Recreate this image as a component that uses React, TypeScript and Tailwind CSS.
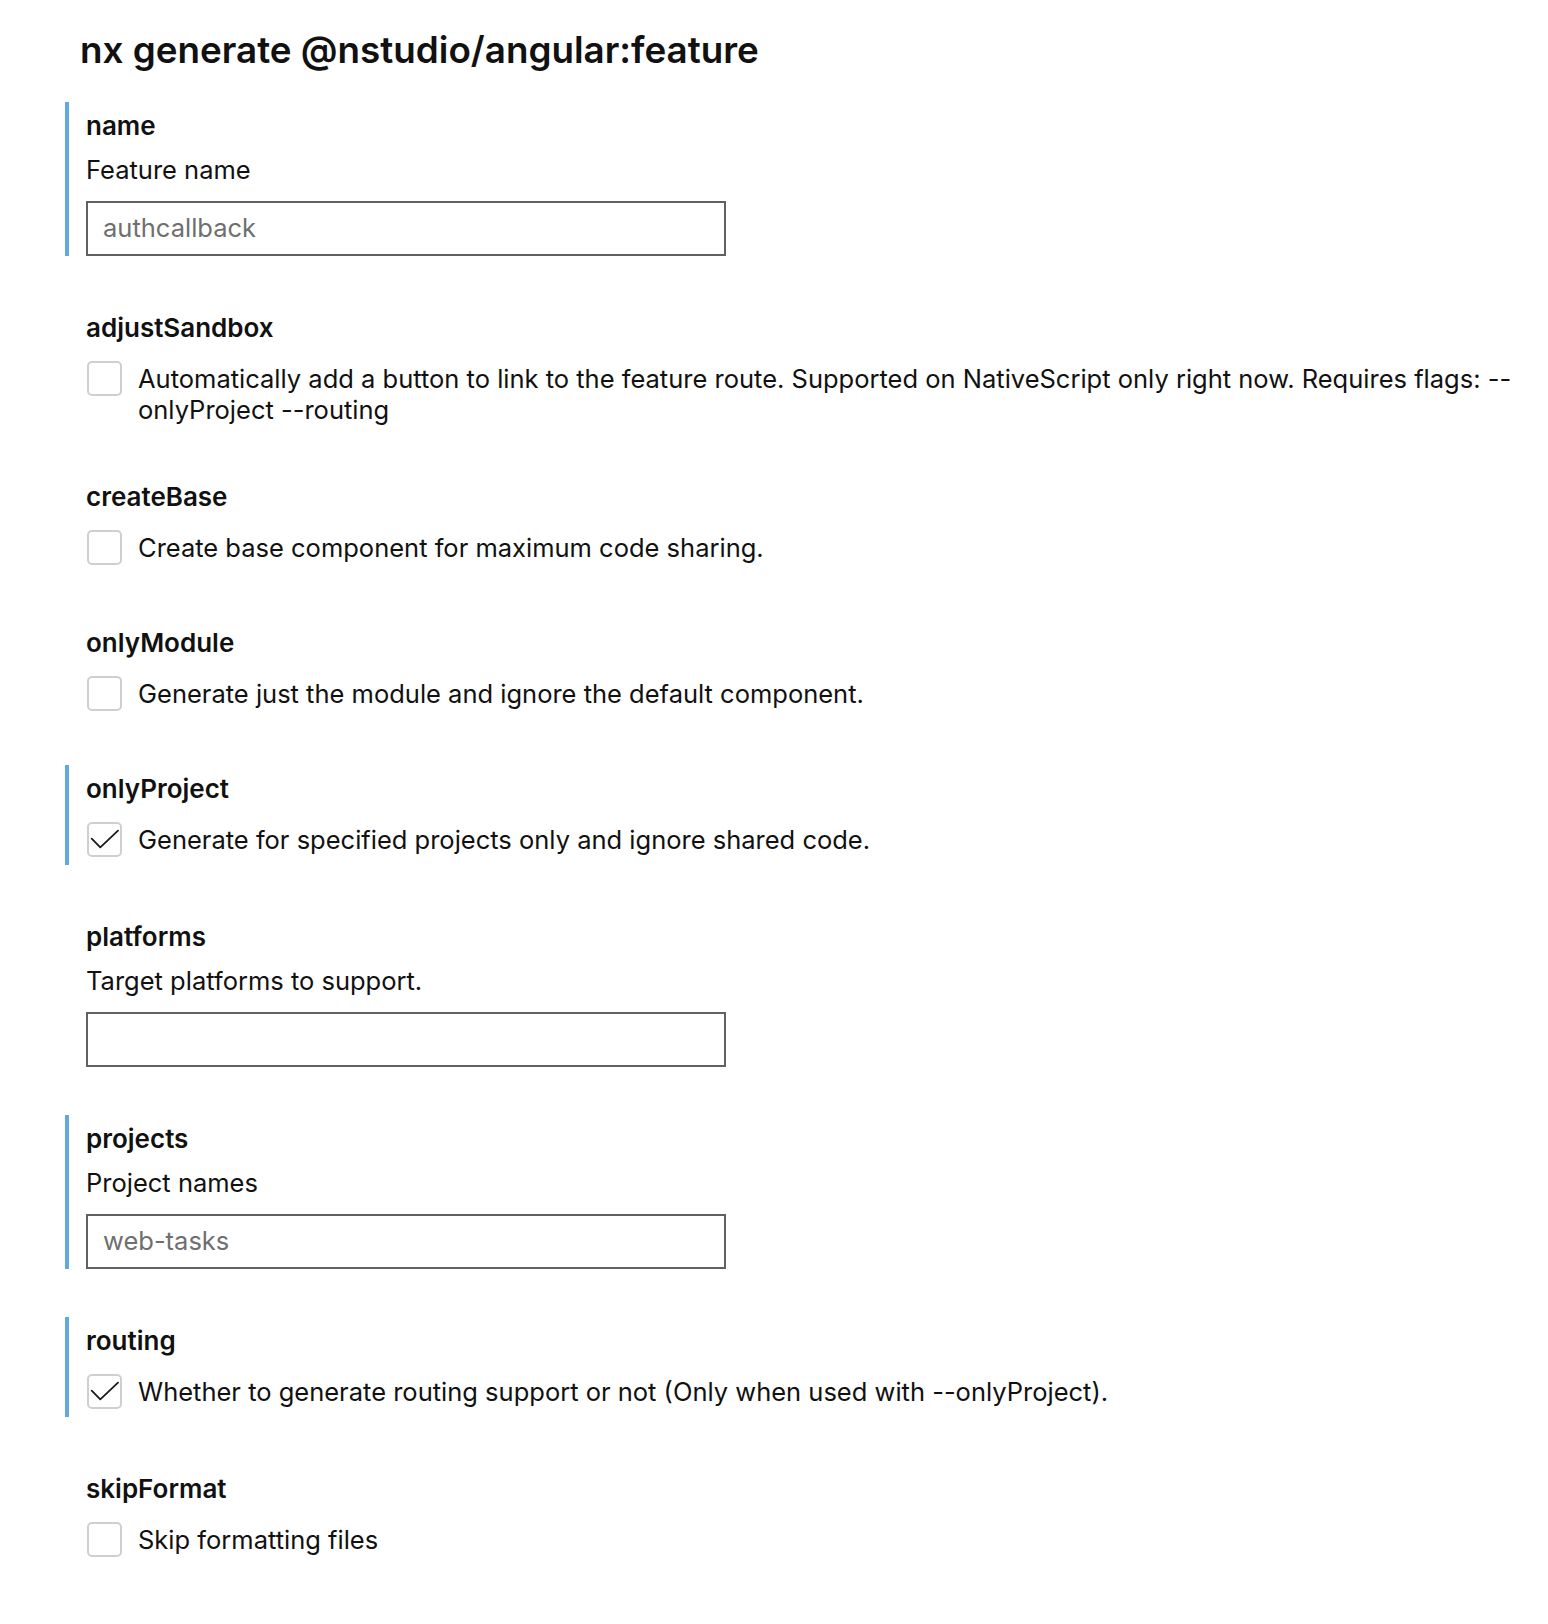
import React from "react";

type Field =
  | { kind: "input"; name: string; desc: string; value: string; active: boolean }
  | { kind: "check"; name: string; desc: string; checked: boolean; active: boolean };

const fields: Field[] = [
  { kind: "input", name: "name", desc: "Feature name", value: "authcallback", active: true },
  {
    kind: "check",
    name: "adjustSandbox",
    desc: "Automatically add a button to link to the feature route. Supported on NativeScript only right now. Requires flags: --onlyProject --routing",
    checked: false,
    active: false,
  },
  { kind: "check", name: "createBase", desc: "Create base component for maximum code sharing.", checked: false, active: false },
  { kind: "check", name: "onlyModule", desc: "Generate just the module and ignore the default component.", checked: false, active: false },
  { kind: "check", name: "onlyProject", desc: "Generate for specified projects only and ignore shared code.", checked: true, active: true },
  { kind: "input", name: "platforms", desc: "Target platforms to support.", value: "", active: false },
  { kind: "input", name: "projects", desc: "Project names", value: "web-tasks", active: true },
  { kind: "check", name: "routing", desc: "Whether to generate routing support or not (Only when used with --onlyProject).", checked: true, active: true },
  { kind: "check", name: "skipFormat", desc: "Skip formatting files", checked: false, active: false },
];

function Checkbox({ checked }: { checked: boolean }) {
  return (
    <div className="shrink-0 w-[35px] h-[35px] ml-px mt-[-2px] mb-[6px] rounded-[5px] border-2 border-[#cfcfcf] bg-white relative">
      {checked && (
        <svg className="absolute left-[-2px] top-[-2px]" width="35" height="35" viewBox="0 0 35 35" fill="none">
          <path d="M4.7 16.7 L13.3 25.3 L31 8.7" stroke="#1a1a1a" strokeWidth="1.8" strokeLinecap="round" strokeLinejoin="round" />
        </svg>
      )}
    </div>
  );
}

function Section({ f }: { f: Field }) {
  return (
    <div
      className={`mb-12 pt-2 pl-[17px] border-l-4 ${f.active ? "border-[#62a9de]" : "border-transparent"} ${f.kind === "check" && f.active ? "pb-[2px]" : ""}`}
    >
      <div className="text-[26px] leading-[32px] font-semibold text-[#111]">{f.name}</div>
      {f.kind === "input" ? (
        <>
          <div className="mt-3 text-[25.5px] leading-[32px] text-[#111]">{f.desc}</div>
          <div className="mt-[15px] w-[640px] h-[55px] border-2 border-[#616161] flex items-center px-[15px] text-[25.5px] text-[#6f6f6f]">
            {f.value}
          </div>
        </>
      ) : (
        <div className="mt-[19px] flex items-start gap-[16px]">
          <Checkbox checked={f.checked} />
          <div className="text-[25.5px] leading-[31px] text-[#111]">{f.desc}</div>
        </div>
      )}
    </div>
  );
}

export default function App() {
  return (
    <div
      className="min-h-[1624px] bg-white text-black"
      style={{ fontFamily: "Inter, 'Noto Sans', sans-serif" }}
    >
      <div className="pl-[65px] pr-[10px]">
        <h1 className="pt-[27px] pl-[15px] text-[36.8px] leading-[46px] font-semibold text-[#111] mb-[29px]">
          nx generate @nstudio/angular:feature
        </h1>
        {fields.map((f) => (
          <Section key={f.name} f={f} />
        ))}
      </div>
    </div>
  );
}
